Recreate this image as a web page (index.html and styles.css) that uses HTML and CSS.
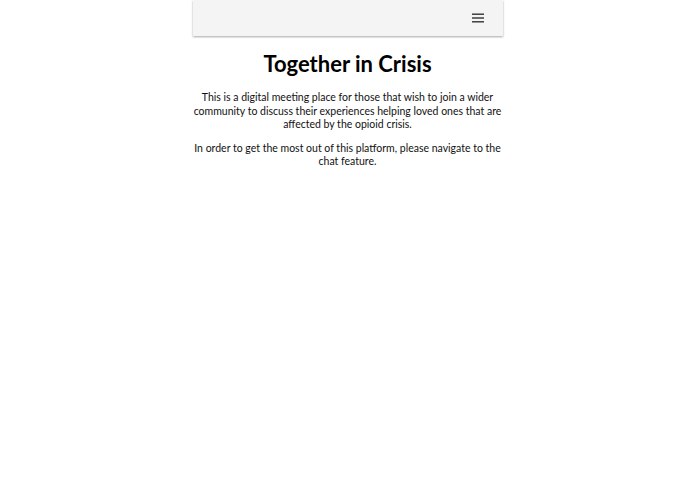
FILE: index.html
```html
<!DOCTYPE html>
<html lang="en">
<head>
<meta charset="utf-8">
<title>Together in Crisis</title>
<link rel="stylesheet" href="styles.css">
</head>
<body>
<div class="app">
  <header class="topbar">
    <button class="menu-btn" aria-label="Menu">
      <svg width="12" height="10" viewBox="0 0 12 10"><rect x="0" y="0.5" width="12" height="1.4" fill="#333"/><rect x="0" y="4.3" width="12" height="1.4" fill="#333"/><rect x="0" y="8.1" width="12" height="1.4" fill="#333"/></svg>
    </button>
  </header>
  <main class="content">
    <h1 class="title">Together in Crisis</h1>
    <p class="text">This is a digital meeting place for those that wish to join a wider community to discuss their experiences helping loved ones that are affected by the opioid crisis.</p>
    <p class="text">In order to get the most out of this platform, please navigate to the chat feature.</p>
  </main>
</div>
</body>
</html>
```
FILE: styles.css
```css
html, body {
  margin: 0;
  padding: 0;
  background: #fff;
}
body {
  font-family: Lato, "Noto Sans", "Liberation Sans", sans-serif;
  color: #111;
}
.app {
  width: 310px;
  margin: 0 auto;
}
.topbar {
  height: 36px;
  background: #f4f4f4;
  box-shadow: 0 1px 2px rgba(0,0,0,0.35);
  display: flex;
  align-items: center;
  justify-content: flex-end;
  padding-right: 19px;
}
.menu-btn {
  background: none;
  border: 0;
  padding: 0;
  display: flex;
  cursor: pointer;
}
.content {
  padding: 14px 0 0;
  text-align: center;
}
.title {
  font-size: 22px;
  font-weight: 700;
  line-height: 28px;
  margin: 0 0 13px;
  color: #000;
}
.text {
  font-size: 10.5px;
  line-height: 13.6px;
  margin: 0 0 10px;
}
```
